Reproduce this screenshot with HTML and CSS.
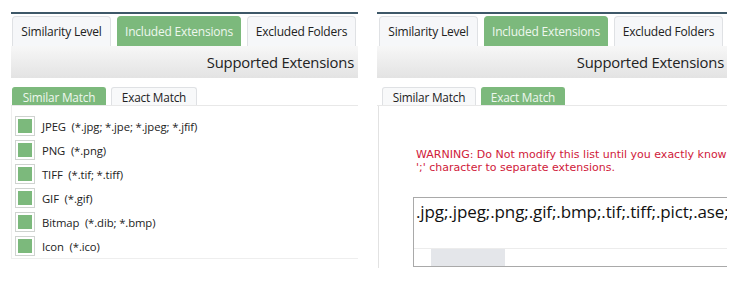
FILE: index.html
```html
<!DOCTYPE html>
<html lang="en">
<head>
  <meta charset="UTF-8" />
  <title>Supported Extensions</title>
  <link rel="stylesheet" href="styles.css">
</head>
<body>
  <div class="panels">

    <!-- similar match view -->
    <div class="panel panel-left">
      <div class="tabs">
        <div class="tab tab-1">Similarity Level</div>
        <div class="tab tab-2 active">Included Extensions</div>
        <div class="tab tab-3">Excluded Folders</div>
      </div>
      <div class="band">Supported Extensions</div>
      <div class="subtabs">
        <div class="subtab sub-1 active">Similar Match</div>
        <div class="subtab sub-2">Exact Match</div>
      </div>
      <div class="content">
        <ul class="ext-list">
          <li><span class="check"></span>JPEG&nbsp; (*.jpg; *.jpe; *.jpeg; *.jfif)</li>
          <li><span class="check"></span>PNG&nbsp; (*.png)</li>
          <li><span class="check"></span>TIFF&nbsp; (*.tif; *.tiff)</li>
          <li><span class="check"></span>GIF&nbsp; (*.gif)</li>
          <li><span class="check"></span>Bitmap&nbsp; (*.dib; *.bmp)</li>
          <li><span class="check"></span>Icon&nbsp; (*.ico)</li>
        </ul>
      </div>
    </div>

    <!-- exact match view -->
    <div class="panel panel-right">
      <div class="tabs">
        <div class="tab tab-1">Similarity Level</div>
        <div class="tab tab-2 active">Included Extensions</div>
        <div class="tab tab-3">Excluded Folders</div>
      </div>
      <div class="band">Supported Extensions</div>
      <div class="subtabs">
        <div class="subtab sub-1">Similar Match</div>
        <div class="subtab sub-2b active">Exact Match</div>
      </div>
      <div class="content content-exact">
        <p class="warning">WARNING: Do Not modify this list until you exactly know what<br>';' character to separate extensions.</p>
        <div class="ext-box">
          <div class="ext-text">.jpg;.jpeg;.png;.gif;.bmp;.tif;.tiff;.pict;.ase;</div>
          <div class="hscroll"><div class="thumb"></div></div>
        </div>
      </div>
    </div>

  </div>
</body>
</html>
```

FILE: styles.css
```css
body {
  margin: 0;
  background: #fff;
  font-family: "Open Sans", "Noto Sans", sans-serif;
  color: #222;
  overflow: hidden;
}
.panels {
  display: flex;
  gap: 19px;
  padding: 12px 0 0 11px;
}
.panel {
  flex: none;
  overflow: hidden;
  border-top: 2px solid #3e5868;
}
.panel-left {
  width: 347px;
}
.panel-right {
  width: 350px;
}
.tabs {
  display: flex;
  gap: 6px;
  padding: 2px 0 0 1px;
}
.panel-right .tabs {
  padding-left: 2px;
}
.tab {
  height: 30px;
  line-height: 29px;
  box-sizing: border-box;
  text-align: center;
  font-size: 12px;
  letter-spacing: -0.2px;
  background: #f6f7f9;
  border: 1px solid #dfe1e4;
  border-bottom: none;
  border-radius: 4px 4px 0 0;
}
.tab-1 { width: 99px; }
.tab-2 { width: 124px; }
.tab-3 { width: 109px; }
.tab.active,
.subtab.active {
  background: #7cb97c;
  border-color: #7cb97c;
  color: #eef7ee;
}
.band {
  height: 32px;
  line-height: 32px;
  text-align: right;
  padding-right: 4px;
  font-size: 14.8px;
  letter-spacing: -0.2px;
  background: linear-gradient(#f7f7f7, #e3e3e3);
}
.panel-right .band {
  padding-right: 3px;
}
.subtabs {
  display: flex;
  gap: 5px;
  margin-top: 9px;
  padding-left: 1px;
  border-bottom: 1px solid #e8e8e8;
}
.panel-right .subtabs {
  padding-left: 5px;
}
.subtab {
  height: 18px;
  line-height: 18px;
  box-sizing: border-box;
  text-align: center;
  font-size: 11.8px;
  letter-spacing: -0.2px;
  background: #f8f9fa;
  border: 1px solid #dfe1e4;
  border-bottom: none;
  border-radius: 3px 3px 0 0;
}
.sub-1 { width: 94px; }
.sub-2 { width: 86px; }
.sub-2b { width: 84px; }
.content {
  height: 152px;
  border-left: 1px solid #eeeeee;
  border-bottom: 1px solid #eeeeee;
}
.content-exact {
  height: 162px;
  margin-left: 1px;
  padding-top: 42px;
  box-sizing: border-box;
  border-left-color: #e2e2e2;
  border-bottom: none;
}
.ext-list {
  list-style: none;
  margin: 0;
  padding: 8px 0 0 3px;
}
.ext-list li {
  display: flex;
  align-items: center;
  height: 24px;
  font-size: 11.3px;
  letter-spacing: -0.1px;
}
.check {
  width: 20px;
  height: 20px;
  box-sizing: border-box;
  border: 1px solid #cfd3d0;
  padding: 2px;
  background: #7cb97c content-box;
  margin-right: 7px;
}
.warning {
  margin: 0 0 0 37px;
  font-family: "DejaVu Sans", Verdana, sans-serif;
  font-size: 11px;
  line-height: 13px;
  color: #d0203a;
  white-space: nowrap;
}
.ext-box {
  margin: 23px 0 0 34px;
  height: 70px;
  box-sizing: border-box;
  border: 1px solid #a9a9a9;
  border-right: none;
  position: relative;
}
.ext-text {
  font-size: 17px;
  padding: 2px 0 0 2px;
  letter-spacing: -0.1px;
  white-space: nowrap;
  color: #111;
}
.hscroll {
  position: absolute;
  left: 0;
  right: 0;
  bottom: 0;
  height: 17px;
  border-top: 1px solid #ececec;
}
.thumb {
  margin-left: 17px;
  width: 74px;
  height: 17px;
  background: #e4e6ea;
}
```
